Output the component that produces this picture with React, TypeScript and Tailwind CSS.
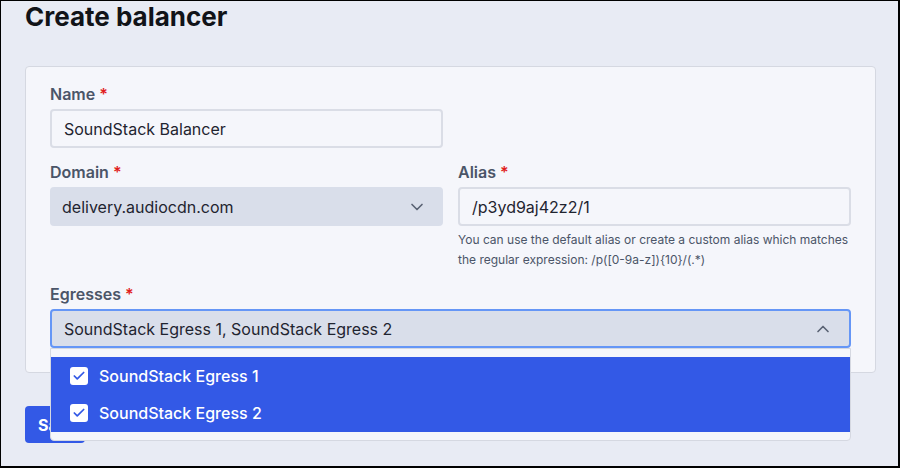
import { Check, ChevronDown, ChevronUp } from "lucide-react";

const Label = ({ text }: { text: string }) => (
  <div className="text-base leading-6 font-semibold text-[#4b5568] mb-[3px]">
    {text}
    <span className="text-[#e11d1d] ml-1">*</span>
  </div>
);

const egresses = ["SoundStack Egress 1", "SoundStack Egress 2"];
const aliasHelp =
  "You can use the default alias or create a custom alias which matches the regular expression: /p([0-9a-z]){10}/(.*)";

export default function App() {
  return (
    <div
      className="w-[900px] h-[468px] overflow-hidden bg-[#e8ebf4] border-t border-l border-r-2 border-b-2 border-black pl-6 pr-[22px]"
      style={{ fontFamily: "Inter, 'Noto Sans', sans-serif" }}
    >
      <h1 className="text-[26px] leading-8 font-bold text-[#111318]">Create balancer</h1>

      <div className="mt-[33px] bg-[#f5f6fb] border border-[#d5d8e1] rounded px-6 pt-[15px] pb-6">
        <div className="grid grid-cols-2 gap-x-[15px] gap-y-3">
          <div>
            <Label text="Name" />
            <div className="h-[39px] flex items-center px-3 bg-[#f5f6fb] border-2 border-[#dadde6] rounded text-base text-[#1f2430]">
              SoundStack Balancer
            </div>
          </div>
          <div />

          <div>
            <Label text="Domain" />
            <div className="h-[39px] flex items-center justify-between px-3 bg-[#d9deea] rounded text-base text-[#1f2430]">
              <span>delivery.audiocdn.com</span>
              <ChevronDown className="w-5 h-5 text-[#5a6273] mr-1" strokeWidth={2} />
            </div>
          </div>
          <div>
            <Label text="Alias" />
            <div className="h-[39px] flex items-center px-3 bg-[#f5f6fb] border-2 border-[#dadde6] rounded text-base text-[#1f2430]">
              /p3yd9aj42z2/1
            </div>
            <p className="mt-1 text-xs leading-5 text-[#4b5568]">{aliasHelp}</p>
          </div>

          <div className="col-span-2">
            <Label text="Egresses" />
            <div className="relative">
              <div className="h-[39px] flex items-center justify-between px-3 bg-[#d9deea] border-2 border-[#6596f6] rounded text-base text-[#1f2430]">
                <span>{egresses.join(", ")}</span>
                <ChevronUp className="w-5 h-5 text-[#5a6273] mr-1" strokeWidth={2} />
              </div>
              <div className="absolute left-0 right-0 top-[39px] z-10 bg-[#f5f6fb] border border-[#d5d8e1] rounded-b py-2">
                {egresses.map((e) => (
                  <div key={e} className="h-[37.5px] flex items-center gap-[11px] pl-[19px] bg-[#3359e6] text-white text-base font-medium">
                    <span className="w-[18px] h-[18px] bg-white rounded-[3px] flex items-center justify-center">
                      <Check className="w-3.5 h-3.5 text-[#3359e6]" strokeWidth={3} />
                    </span>
                    {e}
                  </div>
                ))}
              </div>
            </div>
          </div>
        </div>
      </div>

      <button className="mt-[33px] w-[60px] h-[37px] bg-[#3359e6] rounded text-white text-base font-bold pl-[13px] text-left">
        Save
      </button>
    </div>
  );
}
